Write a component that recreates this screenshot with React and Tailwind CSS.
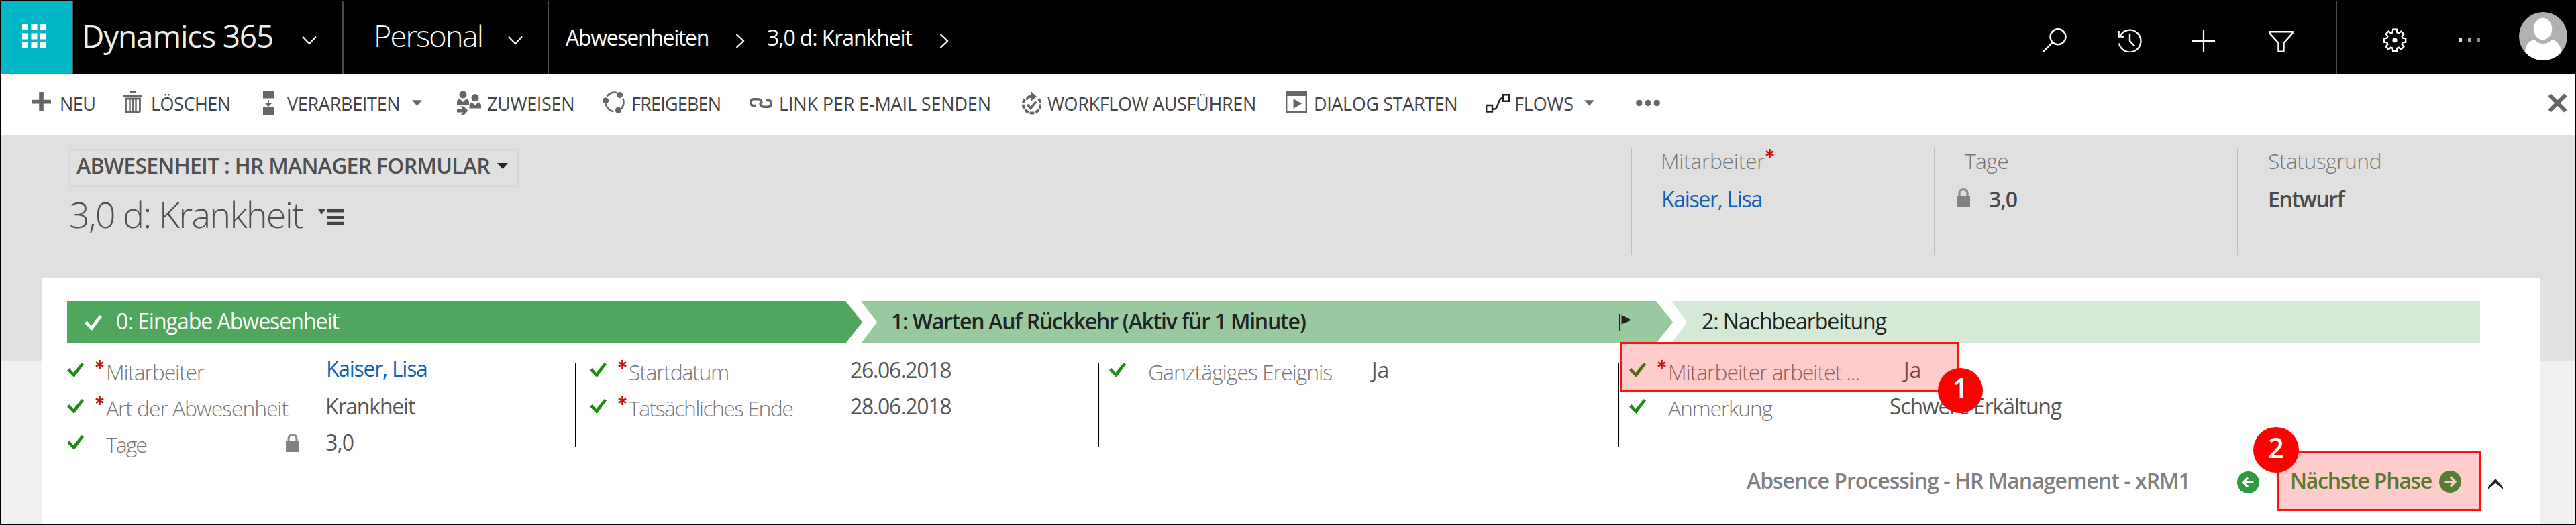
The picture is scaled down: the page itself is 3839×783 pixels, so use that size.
import React from "react";

/* ---------- icons ---------- */

const Chevron = ({ className }) => (
  <svg className={className} viewBox="0 0 22 14" fill="none" stroke="currentColor" strokeWidth="2">
    <path d="M1 1.5 11 12 21 1.5" />
  </svg>
);

const ChevronRight = ({ className }) => (
  <svg className={className} viewBox="0 0 14 22" fill="none" stroke="currentColor" strokeWidth="2.2">
    <path d="M1.5 1 12 11 1.5 21" />
  </svg>
);

const Triangle = ({ className }) => (
  <svg className={className} viewBox="0 0 16 9" fill="currentColor">
    <path d="M0 0h16L8 9z" />
  </svg>
);

const Waffle = () => (
  <svg className="mb-1 ml-[32px] h-9 w-9" viewBox="0 0 36 36" fill="#fff">
    {[0, 13.5, 27].map((y) =>
      [0, 13.5, 27].map((x) => <rect key={`${x}-${y}`} x={x} y={y} width="9" height="9" />)
    )}
  </svg>
);

const SearchIcon = ({ className }) => (
  <svg className={className} viewBox="0 0 36 36" fill="none" stroke="currentColor" strokeWidth="2.4">
    <circle cx="23" cy="12.7" r="11.5" />
    <path d="M15 21 1 35" />
  </svg>
);

const HistoryIcon = ({ className }) => (
  <svg className={className} viewBox="0 0 37 36" fill="none" stroke="currentColor" strokeWidth="2.4">
    <path d="M3.5 11.5A16.4 16.4 0 1 1 2 22.5" />
    <path d="M1.6 4v8.6h8" />
    <path d="M18 8.5V19l7 7.5" />
  </svg>
);

const PlusThin = ({ className }) => (
  <svg className={className} viewBox="0 0 34 34" fill="none" stroke="currentColor" strokeWidth="2.2">
    <path d="M17 0v34M0 17h34" />
  </svg>
);

const FilterIcon = ({ className }) => (
  <svg className={className} viewBox="0 0 37 32" fill="none" stroke="currentColor" strokeWidth="2.4">
    <path d="M1.5 1.3h34v2.2L22.5 18v12.8h-8V18L1.5 3.5z" />
  </svg>
);

// eight teeth, each an outer edge followed by an inner edge: [angle offset, radius]
const tooth = [
  [-10, 16.4],
  [10, 16.4],
  [16, 12.2],
  [29, 12.2],
];
const gearPoints = Array.from({ length: 8 }, (_, i) =>
  tooth.map(([offset, r]) => {
    const t = ((i * 45 + offset) * Math.PI) / 180;
    return `${(18 + r * Math.sin(t)).toFixed(1)},${(18 - r * Math.cos(t)).toFixed(1)}`;
  })
)
  .flat()
  .join(" ");

const GearIcon = ({ className }) => (
  <svg className={className} viewBox="0 0 36 36" fill="none" stroke="currentColor" strokeWidth="2.4">
    <polygon points={gearPoints} />
    <circle cx="18" cy="18" r="3.6" fill="currentColor" stroke="none" />
  </svg>
);

const Avatar = ({ className }) => (
  <svg className={className} viewBox="0 0 72 72">
    <clipPath id="face">
      <circle cx="36" cy="36" r="36" />
    </clipPath>
    <g clipPath="url(#face)">
      <rect width="72" height="72" fill="#b1b1b1" />
      <path d="M9 72V62c0-12 5-19 14-21 4 4 8 6 13 6s9-2 13-6c9 2 14 9 14 21v10z" fill="#fff" />
      <ellipse cx="35.5" cy="25" rx="14.5" ry="17" fill="#fff" stroke="#b1b1b1" strokeWidth="1.5" />
    </g>
  </svg>
);

const PlusIcon = ({ className }) => (
  <svg className={className} viewBox="0 0 29 29" fill="currentColor">
    <path d="M11.2 0h6.6v11.7H29v5.8H17.8V29h-6.6V17.5H0v-5.8h11.2z" />
  </svg>
);

const TrashIcon = ({ className }) => (
  <svg className={className} viewBox="0 0 28 33" fill="none" stroke="currentColor">
    <path d="M9 1.4h10M0 7h28" strokeWidth="2.6" />
    <path d="M3.5 11v18q0 2.5 2.5 2.5h16q2.5 0 2.5-2.5V11z" strokeWidth="2.8" />
    <path d="M9.5 12v18M14 12v18M18.5 12v18" strokeWidth="2.4" />
  </svg>
);

const ProcessIcon = ({ className }) => (
  <svg className={className} viewBox="0 0 18 36" fill="currentColor">
    <path d="M1 0h16v10.5H1zM1 24h16v12H1zM8 13h2v5h4l-5 5-5-5h4z" />
  </svg>
);

const AssignIcon = ({ className }) => (
  <svg className={className} viewBox="0 0 36 36" fill="currentColor">
    <ellipse cx="9" cy="5" rx="5.5" ry="5.5" />
    <path d="M0 20v-3.5C0 13.500 1.500 12 4.500 11.500L9 16l4.500-4.500c3 .5 4.500 2 4.500 5V20z" />
    <ellipse cx="27" cy="9.500" rx="5.500" ry="5.500" />
    <path d="M18.500 25.500V21.500c0-3 1.500-4.500 4-5L27 21l4.500-4.500c3 .5 4.500 2 4.500 5v4z" />
    <path d="M0 27h9l-4-4.500h5L16.500 29 10 36H5l4-4.500H0z" />
  </svg>
);

const ShareIcon = ({ className }) => (
  <svg className={className} viewBox="0 0 33 33" fill="none" stroke="currentColor" strokeWidth="2.600">
    <path d="M6.500 7.500C10 3 15 .8 21 2M30.500 11c1.800 5.500 1 11-3 15.500M16.500 30.500C10.500 29 6 25 4.500 18.500" />
    <g fill="currentColor" stroke="none">
      <circle cx="25.500" cy="5.500" r="4.600" />
      <circle cx="4.600" cy="14" r="4.600" />
      <circle cx="23.500" cy="28.300" r="4.600" />
    </g>
  </svg>
);

const LinkIcon = ({ className }) => (
  <svg className={className} viewBox="0 0 34 15" fill="none" stroke="currentColor" strokeWidth="3.600">
    <path d="M9 11.500H6C3.500 11.500 1.800 10 1.800 7V6c0-2.500 1.500-4.200 4.200-4.200h7c3 0 5 2 5 5.200" />
    <path d="M25 3.500h3c2.500 0 4.200 1.500 4.200 4.500v1c0 2.500-1.500 4.200-4.200 4.200h-7c-3 0-5-2-5-5.200" />
  </svg>
);

const WorkflowIcon = ({ className }) => (
  <svg className={className} viewBox="0 0 31 36" fill="none" stroke="currentColor">
    <path d="M27 11.500A13 13 0 1 1 7 11" strokeWidth="4" strokeDasharray="6.500 2" />
    <path d="M10 20l5 5.500 8-10" strokeWidth="3.600" />
    <path d="M8 12.500C8 8 11 6 15.500 6V0L24 8l-8.500 7V10C12 10 11 11 10.500 13z" fill="currentColor" stroke="none" />
  </svg>
);

const DialogIcon = ({ className }) => (
  <svg className={className} viewBox="0 0 32 32" fill="none" stroke="currentColor" strokeWidth="2.400">
    <path d="M1.200 1.200h29.600v29.600H1.200z" />
    <path d="M1 1h30v6H1zM11.500 11v15L24 18.500z" fill="currentColor" stroke="none" />
  </svg>
);

const FlowIcon = ({ className }) => (
  <svg className={className} viewBox="0 0 36 28" fill="none" stroke="#222" strokeWidth="2.400">
    <path d="M1.200 17h8.800v9.500H1.200zM26 1.200h8.800v9.500H26z" />
    <path d="M10 22.500h3c2 0 3-1 4-3.500l4-10c1-2.500 2-3 5-3" />
  </svg>
);

const MoreIcon = ({ className }) => (
  <svg className={className} viewBox="0 0 36 11" fill="currentColor">
    <circle cx="4.800" cy="5.500" r="4.700" />
    <circle cx="18" cy="5.500" r="4.700" />
    <circle cx="31.200" cy="5.500" r="4.700" />
  </svg>
);

const CloseIcon = ({ className }) => (
  <svg className={className} viewBox="0 0 29 29" fill="none" stroke="currentColor" strokeWidth="6">
    <path d="M2.500 2.500l24 24M26.500 2.500l-24 24" />
  </svg>
);

const Check = ({ className }) => (
  <svg className={className} viewBox="0 0 25 22" fill="currentColor">
    <path d="M0 11.500 3.500 8l6 7L21.500 0 25 2.500 10.500 22z" />
  </svg>
);

const Asterisk = ({ className }) => (
  <svg className={className} viewBox="0 0 13 13" fill="none" stroke="#c8100e" strokeWidth="2.600">
    <path d="M6.500 0v13M.9 3.300l11.200 6.400M12.100 3.300.9 9.700" />
  </svg>
);

const Lock = ({ className }) => (
  <svg className={className} viewBox="0 0 20 27" fill="none" stroke="#8c8c8c">
    <path d="M4 12V7.500C4 3.500 6.500 1.600 10 1.600s6 1.900 6 5.900V12" strokeWidth="3.200" />
    <path d="M0 11h20v16H0z" fill="#828282" stroke="none" />
  </svg>
);

const Flag = ({ className }) => (
  <svg className={className} viewBox="0 0 18 25" fill="currentColor">
    <path d="M0 0h2v25H0zM3.500 1 18 8.500l-14.500 6z" />
  </svg>
);

const MenuIcon = ({ className }) => (
  <svg className={className} viewBox="0 0 38 24" fill="currentColor">
    <path d="M0 0h11L5.500 7.500zM13 0h25v4.500H13zM13 10h25v4.500H13zM13 18.800h25v4.500H13z" />
  </svg>
);

const CircleArrow = ({ className, back }) => (
  <svg className={className} viewBox="0 0 33 33">
    <circle cx="16.500" cy="16.500" r="16.500" fill="#2d9a40" />
    <path
      d={back ? "M24.500 16.500H10M16 9.500l-7 7 7 7" : "M8.500 16.500H23M17 9.500l7 7-7 7"}
      fill="none"
      stroke="#fff"
      strokeWidth="3.200"
    />
  </svg>
);

/* ---------- data ---------- */

const commands = [
  { label: "NEU", icon: <PlusIcon className="mb-1 h-[29px] w-[29px]" />, box: "ml-[46px] gap-[13px]", text: "w-[53px] tracking-[-0.5px]" },
  { label: "LÖSCHEN", icon: <TrashIcon className="mb-[2px] h-[33px] w-[28px]" />, box: "ml-[42px] gap-[13px]", text: "w-[119px] tracking-[-0.5px]" },
  { label: "VERARBEITEN", icon: <ProcessIcon className="h-[36px] w-[18px]" />, box: "ml-[47px] gap-[19px]", text: "w-[170px] tracking-[-0.3px]", caret: "ml-[-3px]" },
  { label: "ZUWEISEN", icon: <AssignIcon className="h-[36px] w-[36px]" />, box: "ml-[52px] gap-[9px]", text: "w-[130px] tracking-[-0.3px]" },
  { label: "FREIGEBEN", icon: <ShareIcon className="mb-[2px] h-[33px] w-[33px]" />, box: "ml-[42px] gap-[10px]", text: "w-[134px] tracking-[-0.8px]" },
  { label: "LINK PER E-MAIL SENDEN", icon: <LinkIcon className="h-[15px] w-[34px]" />, box: "ml-[42px] gap-[10px]", text: "w-[319px] tracking-[-0.15px]" },
  { label: "WORKFLOW AUSFÜHREN", icon: <WorkflowIcon className="h-[36px] w-[31px]" />, box: "ml-[41px] gap-[9px]", text: "w-[314px] tracking-[-0.35px]" },
  { label: "DIALOG STARTEN", icon: <DialogIcon className="mb-1 h-[32px] w-[32px]" />, box: "ml-[41px] gap-[10px]", text: "w-[216px] tracking-[-0.38px]" },
  { label: "FLOWS", icon: <FlowIcon className="h-[28px] w-[36px]" />, box: "ml-[40px] gap-[7px]", text: "w-[88px] tracking-[-0.15px]", caret: "ml-[9px]" },
];

const columns = [
  {
    box: "w-[757px]",
    label: "w-[327px] pr-[39px]",
    fields: [
      { name: "Mitarbeiter", required: true, value: "Kaiser, Lisa", track: "tracking-[-1.23px]", valueClass: "pb-1 pl-px text-[#1160b7] tracking-[-1.3px]" },
      { name: "Art der Abwesenheit", required: true, value: "Krankheit", track: "tracking-[-1.15px]", valueClass: "text-[#555] tracking-[-1.2px]" },
      { name: "Tage", locked: true, value: "3,0", track: "tracking-[-2px]", valueClass: "text-[#555] tracking-[-0.9px]" },
    ],
  },
  {
    box: "w-[777px] pl-5",
    label: "w-[330px]",
    fields: [
      { name: "Startdatum", required: true, value: "26.06.2018", track: "tracking-[-1.31px]", valueClass: "text-[#555] tracking-[-1.3px]" },
      { name: "Tatsächliches Ende", required: true, value: "28.06.2018", track: "tracking-[-1.6px]", valueClass: "text-[#555] tracking-[-1.3px]" },
    ],
  },
  {
    box: "w-[773px] pl-[15px]",
    label: "w-[332px]",
    fields: [
      { name: "Ganztägiges Ereignis", value: "Ja", track: "tracking-[-1.06px]", valueClass: "pl-px text-[#555]" },
    ],
  },
  {
    box: "flex-1 pl-[15px]",
    label: "w-[351px]",
    fields: [
      { name: "Mitarbeiter arbeitet ...", required: true, value: "Ja", track: "tracking-[-1.1px]", valueClass: "text-[#555]" },
      { name: "Anmerkung", value: "Schwere Erkältung", track: "tracking-[-1.26px]", valueClass: "-ml-[21px] text-[#555] tracking-[-1.19px]" },
    ],
  },
];

/* ---------- sections ---------- */

function TopBar() {
  return (
    <header className="flex h-[110px] shrink-0 items-center bg-black text-white">
      <div className="flex h-full w-[108px] items-center border-r border-[#555] bg-[#00b7c5]">
        <Waffle />
      </div>
      <span className="mb-[7px] ml-[13px] w-[286px] text-[46px] tracking-[-1.18px] text-[#eee]">Dynamics 365</span>
      <Chevron className="mt-[7px] ml-[42px] h-[14px] w-[22px]" />
      <span className="ml-[38px] h-full w-[2px] bg-[#4a4a4a]" />
      <span className="mb-[7px] ml-[45px] w-[165px] text-[45px] font-light tracking-[-1.8px]">Personal</span>
      <Chevron className="mt-[7px] ml-[35px] h-[14px] w-[22px]" />
      <span className="ml-[37px] h-full w-[2px] bg-[#4a4a4a]" />
      <span className="ml-[25px] w-[213px] text-[32px] tracking-[-1.31px]">Abwesenheiten</span>
      <ChevronRight className="mt-[9px] ml-[40px] h-[22px] w-[14px]" />
      <span className="ml-[33px] w-[218px] text-[32px] tracking-[-1.1px]">3,0 d: Krankheit</span>
      <ChevronRight className="mt-[9px] ml-[39px] h-[22px] w-[14px]" />

      <div className="mr-[12px] ml-auto flex h-full items-center">
        <SearchIcon className="mt-[8px] h-9 w-9" />
        <HistoryIcon className="mt-[8px] ml-[76px] h-9 w-[37px]" />
        <PlusThin className="mt-[10px] ml-[74px] h-[34px] w-[34px]" />
        <FilterIcon className="mt-[12px] ml-[80px] h-8 w-[37px]" />
        <span className="ml-[63px] h-full w-[2px] bg-[#4a4a4a]" />
        <GearIcon className="mt-[8px] ml-[68px] h-9 w-9" />
        <div className="mt-[6px] ml-[77px] flex w-8 justify-between">
          <span className="h-[5px] w-[5px] bg-[#ddd]" />
          <span className="h-[5px] w-[5px] bg-[#aaa]" />
          <span className="h-[5px] w-[5px] bg-[#888]" />
        </div>
        <Avatar className="mb-1 ml-[58px] h-[72px] w-[72px]" />
      </div>
    </header>
  );
}

function CommandBar() {
  return (
    <nav className="flex h-[90px] shrink-0 items-center bg-white pb-[5px] text-[#666]">
      {commands.map((c) => (
        <div key={c.label} className={`flex items-center ${c.box}`}>
          {c.icon}
          <span className={`pt-px text-[27px] font-medium text-[#444] ${c.text}`}>{c.label}</span>
          {c.caret && <Triangle className={`h-[9px] w-[15px] ${c.caret}`} />}
        </div>
      ))}
      <MoreIcon className="ml-[62px] h-[11px] w-[36px]" />
      <CloseIcon className="mr-[12px] ml-auto h-[29px] w-[29px]" />
    </nav>
  );
}

function RecordHeader() {
  return (
    <section className="flex h-[214px] shrink-0">
      <div className="ml-[102px] pt-[21px]">
        <div className="flex h-[57px] w-[670px] items-center border-2 border-[#d6d6d6] pb-[7px] pl-[9px]">
          <span className="w-[616px] text-[32px] font-semibold tracking-[-0.74px] text-[#4f4f4f]">
            ABWESENHEIT : HR MANAGER FORMULAR
          </span>
          <Triangle className="ml-[11px] h-[9px] w-4 text-[#222]" />
        </div>
        <div className="flex h-20 items-center">
          <span className="w-[354px] text-[54px] font-light tracking-[-1.8px] text-[#505050]">3,0 d: Krankheit</span>
          <MenuIcon className="mt-[10px] ml-[17px] h-6 w-[38px] text-[#444]" />
        </div>
      </div>

      <div className="mt-5 mr-[52px] ml-auto flex h-40 text-[32px]">
        <div className="w-[452px] border-l-2 border-[#bac1c1] pl-[43px]">
          <div className="flex h-[38px] items-center">
            <span className="w-[156px] font-light tracking-[-0.4px] text-[#777]">Mitarbeiter</span>
            <Asterisk className="mb-[23px] h-[13px] w-[13px]" />
          </div>
          <div className="mt-[19px] flex h-[38px] items-center pl-px tracking-[-1.35px] text-[#1160b7]">
            Kaiser, Lisa
          </div>
        </div>
        <div className="w-[452px] border-l-2 border-[#bac1c1] pl-8">
          <div className="flex h-[38px] items-center pl-3 font-light tracking-[-0.7px] text-[#777]">Tage</div>
          <div className="mt-[19px] flex h-[38px] items-center">
            <Lock className="mb-[6px] h-[27px] w-5" />
            <span className="ml-[28px] font-semibold tracking-[-1.1px] text-[#4a4a4a]">3,0</span>
          </div>
        </div>
        <div className="w-[452px] border-l-2 border-[#bac1c1] pl-[44px]">
          <div className="flex h-[38px] items-center font-light tracking-[-0.59px] text-[#777]">Statusgrund</div>
          <div className="mt-[19px] flex h-[38px] items-center font-semibold tracking-[-1.38px] text-[#4a4a4a]">
            Entwurf
          </div>
        </div>
      </div>
    </section>
  );
}

function Stages() {
  return (
    <div className="flex h-[63px] w-[3596px] text-[32px]">
      <div className="flex w-[1185px] items-center bg-[#4fa65c] pb-[3px] pl-[26px] text-white [clip-path:polygon(0_0,1160px_0,100%_50%,1160px_100%,0_100%)]">
        <Check className="mt-1 h-[23px] w-[26px]" />
        <span className="ml-[21px] tracking-[-1px]">0: Eingabe Abwesenheit</span>
      </div>
      <div className="-ml-[2px] flex w-[1210px] items-center bg-[#99ca9f] pb-[3px] pl-[45px] text-[#222] [clip-path:polygon(0_0,1185px_0,100%_50%,1185px_100%,0_100%,24px_50%)]">
        <span className="font-semibold tracking-[-1.24px]">1: Warten Auf Rückkehr (Aktiv für 1 Minute)</span>
        <Flag className="mt-1 mr-[62px] ml-auto h-[25px] w-[18px]" />
      </div>
      <div className="-ml-[2px] flex w-[1205px] items-center bg-[#d5e9d7] pb-[3px] pl-[45px] text-[#222] [clip-path:polygon(0_0,100%_0,100%_100%,0_100%,23px_50%)]">
        <span className="tracking-[-1.05px]">2: Nachbearbeitung</span>
      </div>
    </div>
  );
}

function Field({ field, labelClass }) {
  return (
    <div className="flex h-[54px] items-center whitespace-nowrap">
      <Check className="h-[22px] w-[25px] text-[#208a14]" />
      <div className="mr-[3px] ml-[17px] w-[13px]">
        {field.required && <Asterisk className="mb-[17px] h-[13px] w-[13px]" />}
      </div>
      <div className={`flex shrink-0 items-center justify-between ${labelClass}`}>
        <span className={`pt-[6px] font-light text-[#777] ${field.track}`}>{field.name}</span>
        {field.locked && <Lock className="h-[27px] w-5" />}
      </div>
      <span className={field.valueClass}>{field.value}</span>
    </div>
  );
}

function ProcessCard() {
  return (
    <section className="mr-[52px] ml-[62px] flex-1 bg-white pt-[34px] pl-[37px]">
      <Stages />
      <div className="flex h-[174px] text-[32px]">
        {columns.map((col, i) => (
          <React.Fragment key={i}>
            {i > 0 && <span className="mt-[29px] h-[126px] w-[2px] bg-black" />}
            <div className={`pt-[13px] ${col.box}`}>
              {col.fields.map((f) => (
                <Field key={f.name} field={f} labelClass={col.label} />
              ))}
            </div>
          </React.Fragment>
        ))}
      </div>
      <div className="flex h-[62px] items-center justify-end pr-[56px] text-[32px] font-semibold">
        <span className="w-[662px] tracking-[-0.98px] text-[#808080]">Absence Processing - HR Management - xRM1</span>
        <CircleArrow back className="mt-[4px] ml-[69px] h-[33px] w-[33px]" />
        <span className="ml-[32px] h-9 w-px bg-[#bbb]" />
        <span className="ml-[13px] w-[211px] tracking-[-1.26px] text-[#2d9838]">Nächste Phase</span>
        <CircleArrow className="mt-[2px] ml-[11px] h-[33px] w-[33px]" />
        <svg className="mt-[9px] ml-[40px] h-[16px] w-[22px]" viewBox="0 0 22 16" fill="#222">
          <path d="M0 12.500 11 0l11 12.500V16L11 6.500 0 16z" />
        </svg>
      </div>
    </section>
  );
}

export default function App() {
  return (
    <div className="relative flex h-[783px] w-full flex-col overflow-hidden border border-black bg-white font-['Open_Sans','Noto_Sans',sans-serif] leading-none whitespace-nowrap">
      <TopBar />
      <CommandBar />
      <main className="flex flex-1 flex-col bg-[linear-gradient(#e0e0e0_338px,#f0f0f0_338px)]">
        <RecordHeader />
        <ProcessCard />
      </main>

      {/* callouts */}
      <div className="absolute top-[509px] left-[2414px] h-[75px] w-[505px] border-[3px] border-[#f11] bg-[#ff0000]/20" />
      <div className="absolute top-[548px] left-[2887px] flex h-[67px] w-[67px] items-center justify-center rounded-full bg-[#f00] pb-[8px] text-[41px] font-semibold text-white">
        1
      </div>
      <div className="absolute top-[671px] left-[3393px] h-[90px] w-[304px] border-[3px] border-[#f11] bg-[#ff0000]/20" />
      <div className="absolute top-[636px] left-[3357px] flex h-[68px] w-[68px] items-center justify-center rounded-full bg-[#f00] pb-[8px] text-[41px] font-semibold text-white">
        2
      </div>
    </div>
  );
}
